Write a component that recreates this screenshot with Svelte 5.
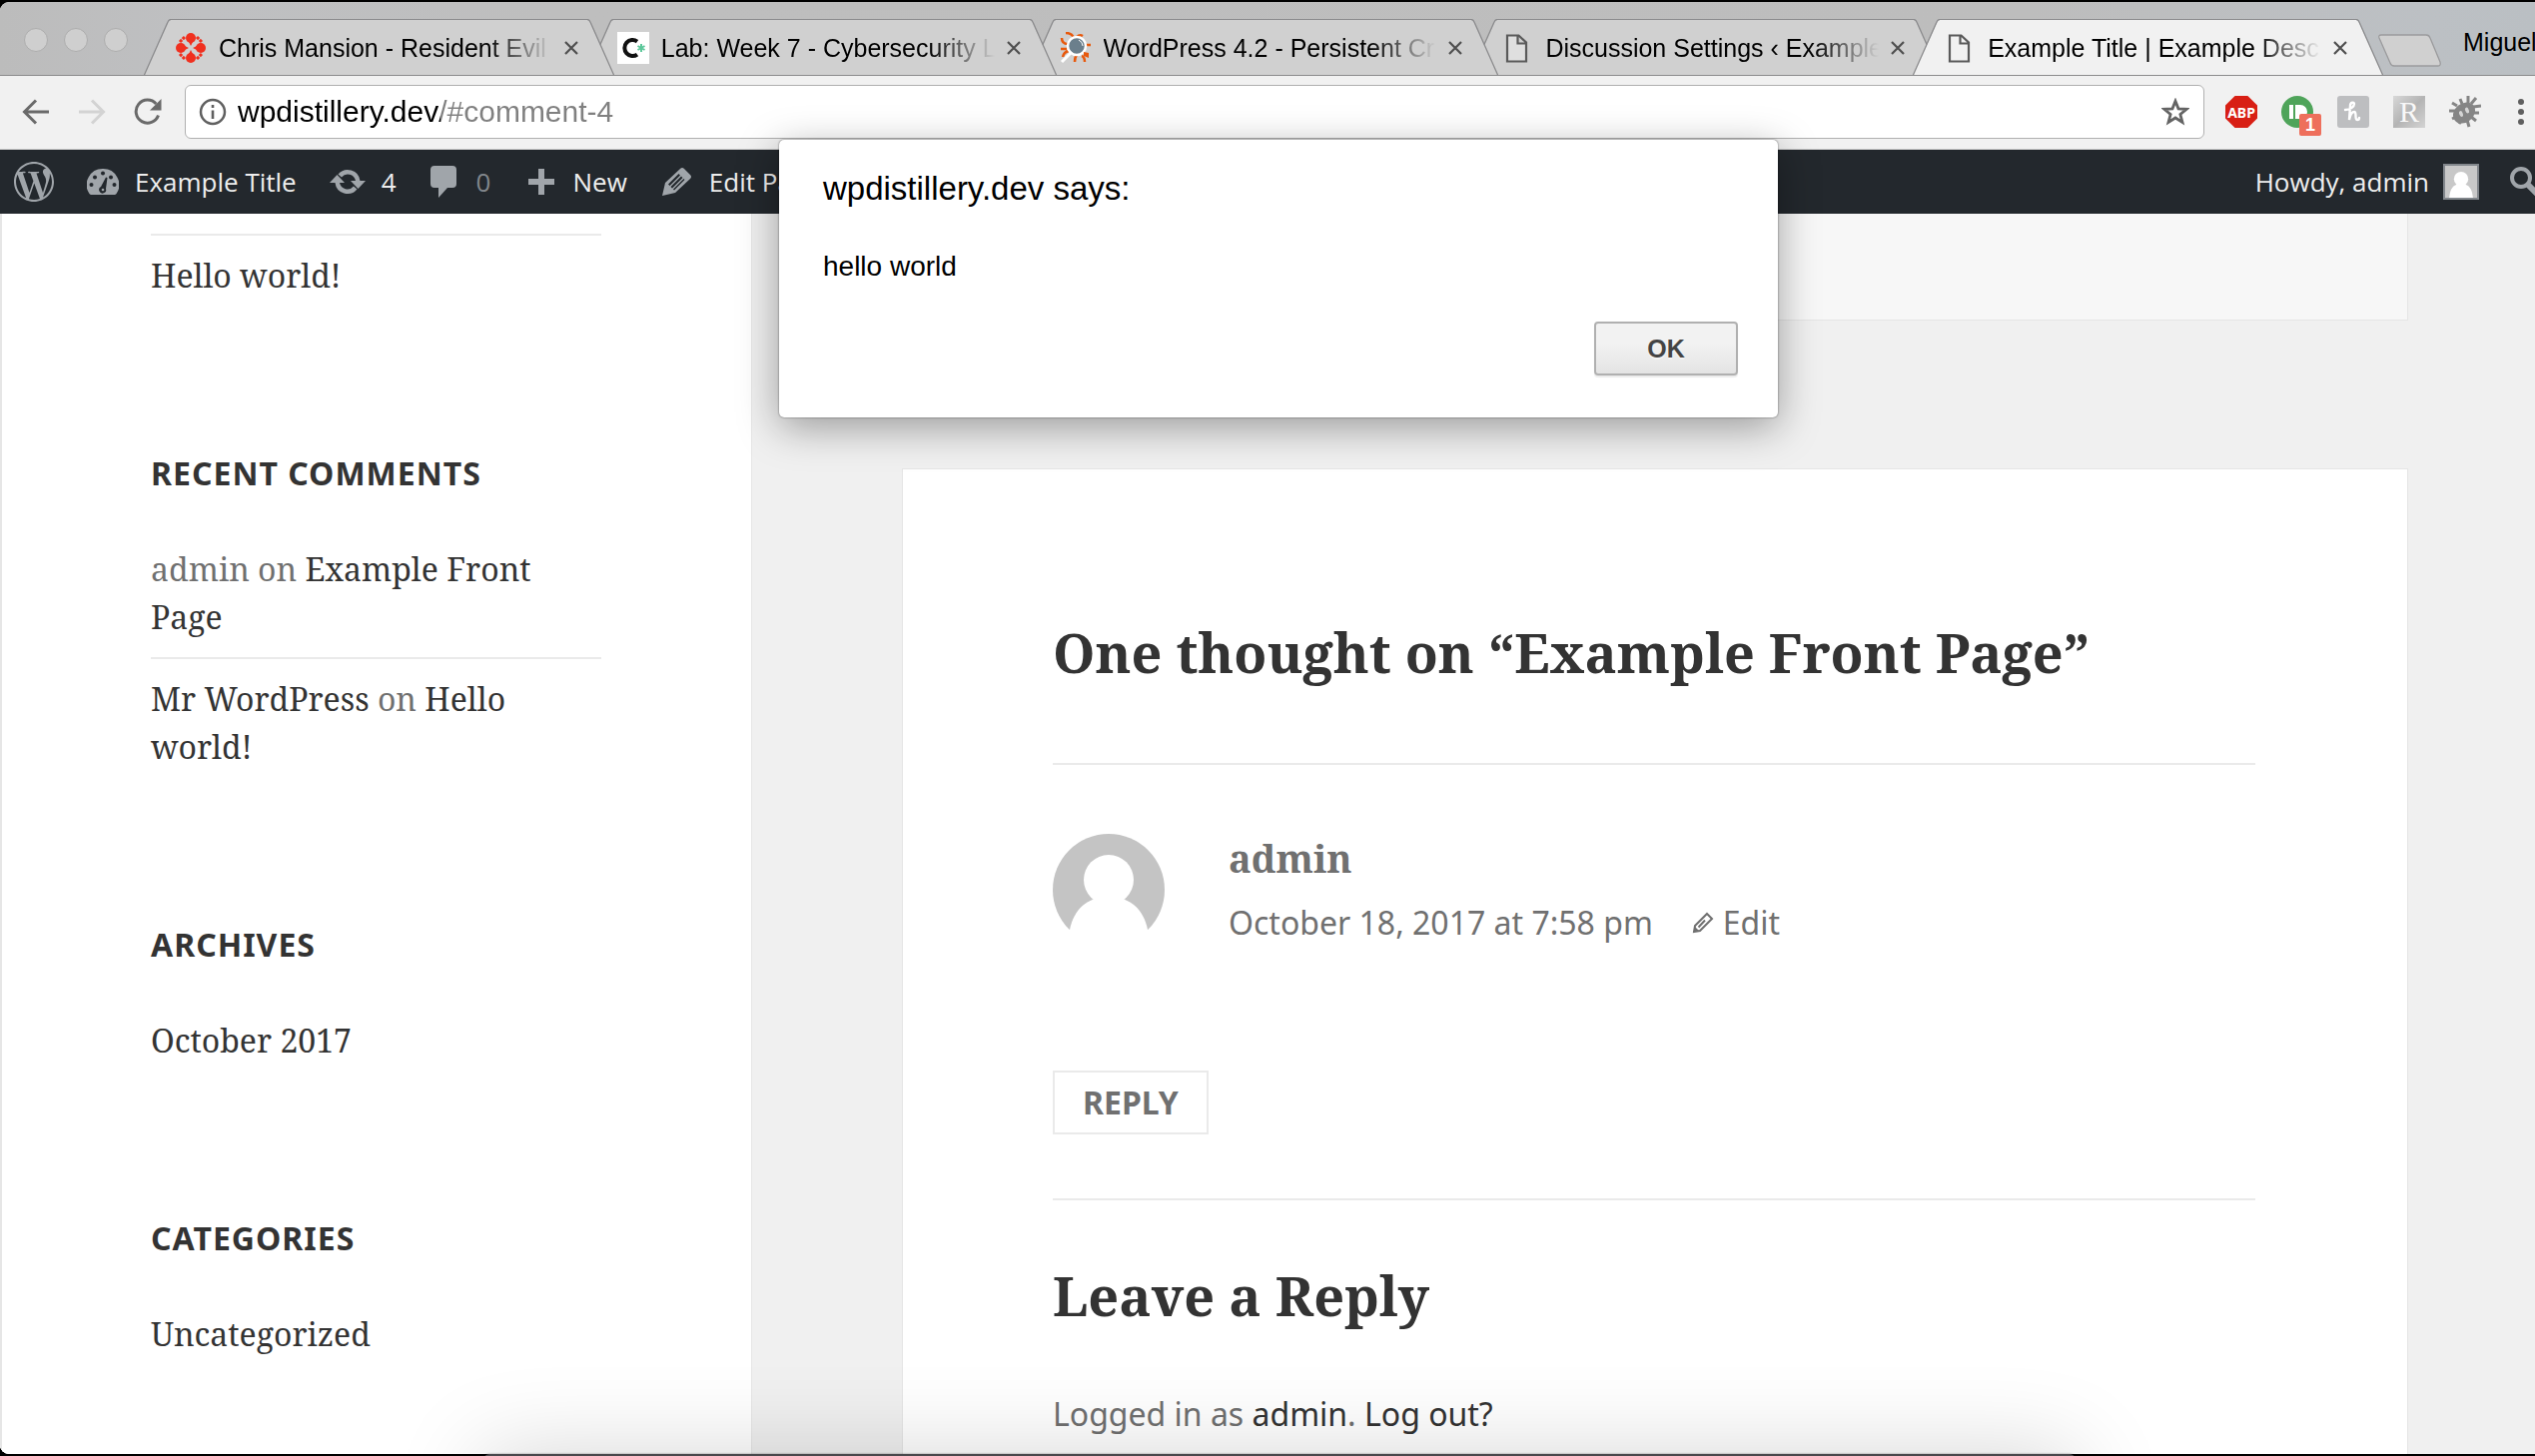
<script>
  const tabs = [
    { title: 'Chris Mansion - Resident Evil', icon: 'ign', active: false },
    { title: 'Lab: Week 7 - Cybersecurity L', icon: 'cstar', active: false },
    { title: 'WordPress 4.2 - Persistent Cr', icon: 'bug', active: false },
    { title: 'Discussion Settings ‹ Example', icon: 'doc', active: false },
    { title: 'Example Title | Example Desc', icon: 'doc', active: true }
  ];
  let url = $state('wpdistillery.dev/#comment-4');
</script>

{#snippet person()}
  <circle cx="56" cy="46" r="25" />
  <path d="M56 63c-22 0-35 13-39 33l-3 17h84l-3-17c-4-20-17-33-39-33z" />
{/snippet}

<div class="desktop">
  <div class="window">
    <header class="strip">
      <div class="lights"><i></i><i></i><i></i></div>
      <nav class="tabs" aria-label="Tabs">
        {#each tabs as tab}
          <div class="tab" class:active={tab.active}>
            <svg class="slant" viewBox="0 0 27 57" aria-hidden="true">
              <path class="fill" d="M0 57 24 4Q26 .5 27 .5V57z" />
              <path class="edge" d="M0 57 24 3Q25 .5 27 .5" />
            </svg>
            <div class="tab-body">
              <svg class="favicon" viewBox="0 0 32 32" aria-hidden="true">
                {#if tab.icon === 'ign'}
                  <g fill="#f0301f">
                    <circle cx="16" cy="6" r="5" />
                    <circle cx="16" cy="26" r="5" />
                    <circle cx="6" cy="16" r="5" />
                    <circle cx="26" cy="16" r="5" />
                    <path d="M13 8h6l-3 6zM13 24h6l-3-6zM8 13v6l6-3zM24 13v6l-6-3z" />
                  </g>
                  <path d="M5 10l5-5M22 5l5 5M5 22l5 5M22 27l5-5" stroke="#f0301f" stroke-width="3" stroke-dasharray="3 1" />
                {:else if tab.icon === 'cstar'}
                  <path d="M0 0h32v32H0z" fill="#fff" />
                  <path d="M20 9.500a8 8 0 1 0 0 13" fill="none" stroke="#111" stroke-width="4" />
                  <path d="M24 12v8M20.500 14l7 4M27.500 14l-7 4" stroke="#5cc79a" stroke-width="2" />
                {:else if tab.icon === 'bug'}
                  <g fill="none" stroke="#e8590c" stroke-width="2.500">
                    <path d="M6 1q6 0 8 5M2 6q0 6 6 6M1 17h6M3 25q1-5 6-6M15 30q0-5 2-7M22 24q3 1 3 6M25 13h6M17 5q3-3 6-1" />
                  </g>
                  <circle cx="17" cy="14" r="9" fill="#6b7f8c" stroke="#fff" stroke-width="2.500" />
                  <path d="M12 20 2 30" stroke="#fff" stroke-width="3" />
                  <path d="M19 8q4 2 4 6" stroke="#fff" fill="none" />
                  <path d="M24 20l5 1v5l-5-2z" fill="#e8590c" />
                {:else}
                  <path d="M6 3.500h11.500l7.500 7V29.500H6zM16.500 3.500v8H25" fill="#f4f4f4" fill-opacity=".4" stroke="#5a5a5a" stroke-width="2.200" />
                {/if}
              </svg>
              <a class="tab-title" href="#tab">{tab.title}</a>
              <button class="close" aria-label="Close tab">
                <svg viewBox="0 0 14 14"><path d="M1 1l12 12M13 1 1 13" stroke="#4f4f4f" stroke-width="2.200" /></svg>
              </button>
            </div>
            <svg class="slant" viewBox="0 0 27 57" aria-hidden="true">
              <path class="fill" d="M27 57 3 4Q1 .5 0 .5V57z" />
              <path class="edge" d="M27 57 3 3Q2 .5 0 .5" />
            </svg>
          </div>
        {/each}
      </nav>
      <div class="strip-end">
        <button class="new-tab" aria-label="New tab">
          <svg viewBox="0 0 66 34"><path d="M4 1h45q3 0 4 3l10 24q1 4-2 4H17q-3 0-4-3L2 4q-1-3 2-3z" fill="#d0d0d0" stroke="#9b9b9d" stroke-width="1.300" /></svg>
        </button>
        <span class="profile">Miguel</span>
      </div>
    </header>

    <div class="toolbar">
      <div class="nav-buttons">
        <button aria-label="Back"><svg viewBox="0 0 28 28"><path d="M27 14H3M14 2.500 2.500 14 14 25.500" fill="none" stroke="#6a6a6a" stroke-width="3" /></svg></button>
        <button aria-label="Forward" disabled><svg viewBox="0 0 28 28"><path d="M1 14h24M14 2.500 25.500 14 14 25.500" fill="none" stroke="#d3d3d3" stroke-width="3" /></svg></button>
        <button aria-label="Reload"><svg viewBox="0 0 28 28"><path d="M24.500 17.500A11.500 11.500 0 1 1 22.300 6" fill="none" stroke="#6a6a6a" stroke-width="3" /><path d="M27.500 1v11.500H16z" fill="#6a6a6a" /></svg></button>
      </div>
      <div class="omnibox">
        <svg class="i28" viewBox="0 0 28 28" aria-hidden="true"><circle cx="14" cy="14" r="12" fill="none" stroke="#606060" stroke-width="2.500" /><path d="M14 7v3M14 12.500v8.500" stroke="#606060" stroke-width="2.600" /></svg>
        <input type="text" aria-label="Address" bind:value={url} />
        <button class="star" aria-label="Bookmark"><svg class="i28" viewBox="0 0 28 28"><path d="M14 3.200l3 7.600 8.200.5-6.300 5.200 2.100 8-7-4.500-7 4.500 2.100-8-6.300-5.200 8.200-.5z" fill="none" stroke="#646464" stroke-width="2.800" /></svg></button>
      </div>
      <div class="extensions">
        <button class="abp" aria-label="Adblock Plus"><span>ABP</span></button>
        <button class="green" aria-label="Pushbullet">
          <svg viewBox="0 0 32 32"><circle cx="16" cy="16" r="16" fill="#4fa45a" /><path d="M8 9h4v14H8zM14 9h5a7 7 0 0 1 0 14h-5z" fill="#fff" /></svg>
          <span class="count">1</span>
        </button>
        <button aria-label="Honey"><svg viewBox="0 0 32 32"><rect width="32" height="32" rx="3" fill="#bdbec0" /><path d="M8 14c5 0 9-3 9-6 0-2-4-2-4 2l-1 14c1-5 3-8 5-8 3 0 0 8 3 8 1 0 2-1 2-2" fill="none" stroke="#fff" stroke-width="2.400" stroke-linecap="round" /></svg></button>
        <button class="letter" aria-label="Reader"><span>R</span></button>
        <button aria-label="Debugger"><svg viewBox="0 0 32 32"><g stroke="#858585" fill="none" stroke-width="3"><path d="M8 10 3 7M13 8 11 3M19 8V0M22 8l5-6M24 11l8-1M25 17h5M22 21l5 4M18 24l2 7M12 25l-2 3M7 21l-4 2M6 15H0" /></g><ellipse cx="15" cy="17" rx="12" ry="9.500" transform="rotate(-40 15 17)" fill="#858585" /><ellipse cx="12" cy="18" rx="1.800" ry="3" transform="rotate(-20 12 18)" fill="#d5d5d5" /><ellipse cx="18" cy="14.500" rx="1.800" ry="3" transform="rotate(-20 18 14.500)" fill="#d5d5d5" /></svg></button>
      </div>
      <button class="menu" aria-label="Menu"><svg viewBox="0 0 6 26"><g fill="#5f5f5f"><circle cx="3" cy="3" r="3" /><circle cx="3" cy="13" r="3" /><circle cx="3" cy="23" r="3" /></g></svg></button>
    </div>

    <nav class="adminbar" aria-label="Toolbar">
      <a href="#wp" aria-label="About WordPress"><svg width="40" height="40" viewBox="0 0 24 24"><path d="M21.469 6.825c.84 1.537 1.318 3.300 1.318 5.175 0 3.979-2.156 7.456-5.363 9.325l3.295-9.527c.615-1.540.820-2.771.820-3.864 0-.405-.026-.780-.070-1.110m-7.981.105c.647-.030 1.232-.105 1.232-.105.582-.075.514-.930-.067-.899 0 0-1.755.135-2.880.135-1.064 0-2.850-.150-2.850-.150-.585-.030-.661.855-.075.885 0 0 .540.061 1.125.090l1.680 4.605-2.370 7.080L5.354 6.900c.649-.030 1.234-.100 1.234-.100.585-.075.516-.930-.065-.896 0 0-1.746.138-2.874.138-.200 0-.438-.008-.690-.015C4.911 3.150 8.235 1.215 12 1.215c2.809 0 5.365 1.072 7.286 2.833-.046-.003-.091-.009-.141-.009-1.060 0-1.812.923-1.812 1.914 0 .890.513 1.643 1.060 2.531.411.720.890 1.643.890 2.977 0 .915-.354 1.994-.821 3.479l-1.075 3.585-3.900-11.610.001.014zM12 22.784c-1.059 0-2.081-.153-3.048-.437l3.237-9.406 3.315 9.087c.024.053.050.101.078.149-1.120.393-2.325.609-3.582.609M1.211 12c0-1.564.336-3.050.935-4.390L7.290 21.709C3.694 19.960 1.212 16.271 1.211 12M12 0C5.385 0 0 5.385 0 12s5.385 12 12 12 12-5.385 12-12S18.615 0 12 0" /></svg></a>
      <a href="#site">
        <svg width="32" height="28" viewBox="0 0 32 28"><path d="M16 1a16 16 0 0 1 13.500 25q-.6 1-2 1h-23q-1.400 0-2-1A16 16 0 0 1 16 1z" /><g fill="#23282d"><circle cx="16" cy="5.500" r="2" /><circle cx="8" cy="9.500" r="2" /><circle cx="24" cy="9.500" r="2" /><circle cx="4.500" cy="17" r="2" /><circle cx="27.500" cy="17" r="2" /><path d="M19 9.500l1.500.5-1.500 11a3.500 3.500 0 1 1-5-2z" /></g><circle cx="16" cy="22" r="1.300" /></svg>
        Example Title
      </a>
      <a href="#updates">
        <svg width="36" height="28" viewBox="0 0 36 28"><path d="M8.500 6.500A12.500 12.500 0 0 1 30.500 13H36l-7.500 8L21 13h5A8 8 0 0 0 12 9.500zM27.500 21.500A12.500 12.500 0 0 1 5.500 15H0l7.500-8L15 15h-5a8 8 0 0 0 14 3.500z" /></svg>
        4
      </a>
      <a href="#comments" class="muted">
        <svg width="31" height="32" viewBox="0 0 31 32"><path d="M5 0h18q4 0 4 4v14q0 4-4 4h-5l-9 10V22H5q-4 0-4-4V4q0-4 4-4z" /></svg>
        0
      </a>
      <a href="#new">
        <svg width="33" height="26" viewBox="0 0 33 26"><path d="M15 0h6v10h10v6H21v10h-6V16H5v-6h10z" /></svg>
        New
      </a>
      <a href="#edit-page">
        <svg width="33" height="28" viewBox="0 0 33 28"><path fill-rule="evenodd" d="M20 1q2-2 4 0l6 6q2 2 0 4L15 25 2 28 5 15zM18.500 6 8 16.500l1.500 1.500L20 7.500zM21 8.500 10.500 19l1.500 1.500L22.500 10zM23.500 11 13 21.500l1 1L24.500 12z" /></svg>
        Edit Page
      </a>
      <a href="#account" class="account">
        Howdy, admin
        <svg class="mini-avatar" viewBox="0 0 112 112"><path d="M0 0h112v112H0z" fill="#c8c8c8" /><g fill="#fff">{@render person()}</g></svg>
      </a>
      <button class="search" aria-label="Search"><svg width="25" height="32" viewBox="0 0 25 32"><circle cx="11" cy="12" r="9" fill="none" stroke="#a0a5aa" stroke-width="4" /><path d="M17 18l12 12" stroke="#a0a5aa" stroke-width="6" /></svg></button>
    </nav>

    <div class="page">
      <aside>
        <ul class="posts"><li><a href="#hello">Hello world!</a></li></ul>
        <section>
          <h2>Recent Comments</h2>
          <ul>
            <li>admin on <a href="#front">Example Front Page</a></li>
            <li><a href="#mr">Mr WordPress</a> on <a href="#hello">Hello world!</a></li>
          </ul>
        </section>
        <section>
          <h2>Archives</h2>
          <ul><li><a href="#october">October 2017</a></li></ul>
        </section>
        <section>
          <h2>Categories</h2>
          <ul><li><a href="#uncategorized">Uncategorized</a></li></ul>
        </section>
      </aside>

      <main>
        <div class="entry-footer"></div>
        <section class="card">
          <h1>One thought on “Example Front Page”</h1>
          <article>
            <div class="author">
              <svg class="avatar" viewBox="0 0 112 112" aria-hidden="true">
                <defs><clipPath id="round"><circle cx="56" cy="56" r="56" /></clipPath></defs>
                <g clip-path="url(#round)"><path d="M0 0h112v96H0z" fill="#c4c4c4" /><g fill="#fff">{@render person()}</g></g>
              </svg>
              <div>
                <b>admin</b>
                <p class="meta">
                  <a href="#comment-4">October 18, 2017 at 7:58 pm</a>
                  <a class="edit" href="#edit"><svg width="24" height="24" viewBox="0 0 24 24"><path d="M16 3l5 5L9 20l-6 1 1-6zM14 9.500 7.500 16.500" fill="none" stroke="#707070" stroke-width="2" /><path d="M3 21l1-5 4 4z" fill="#707070" /></svg>Edit</a>
                </p>
              </div>
            </div>
            <a class="reply" href="#reply">Reply</a>
          </article>
          <h1>Leave a Reply</h1>
          <p class="logged">Logged in as <a href="#admin">admin</a>. <a href="#logout">Log out?</a></p>
        </section>
      </main>
    </div>
  </div>

  <div class="dialog" role="alertdialog" aria-labelledby="dialog-title" aria-describedby="dialog-text">
    <h2 id="dialog-title">wpdistillery.dev says:</h2>
    <p id="dialog-text">hello world</p>
    <button>OK</button>
  </div>
  <div class="dock-shadow"></div>
</div>

<style>
  :global(body) { background: #000; }
  * { box-sizing: border-box; margin: 0; padding: 0; }
  a { color: inherit; text-decoration: none; }
  button { border: 0; background: none; color: inherit; font: inherit; display: flex; }
  ul { list-style: none; }
  svg { display: block; flex: none; }

  .desktop { position: relative; height: 100vh; padding: 2px 0; overflow: hidden; font-family: "Liberation Sans", Arial, sans-serif; }
  .window { display: flex; flex-direction: column; height: 100%; overflow: hidden; border-radius: 9px 0 0 9px; background: #f1f1f1; }

  .strip { flex: none; display: flex; align-items: flex-end; height: 74px; overflow: hidden; border-bottom: 1px solid #8b8b8d; background: linear-gradient(90deg, #bcbcbc, #bfc0c2 8%, #bebebe 22%, #bdbdbd 80%, #bcc0c4 96%, #babfc3); font-size: 25px; }
  .lights { flex: none; display: flex; gap: 16px; width: 144px; padding: 0 0 23px 24px; }
  .lights i { width: 24px; height: 24px; border: 1px solid #adadad; border-radius: 50%; background: #cfcfcf; }
  .tabs { flex: 1; min-width: 0; display: flex; align-self: flex-end; position: relative; margin-bottom: -1px; }
  .tab { flex: 1; min-width: 0; display: flex; height: 57px; margin-right: -28px; position: relative; --fill: #d0d0d0; }
  .tab:last-child { margin-right: 0; }
  .tab:nth-child(1) { z-index: 4; }
  .tab:nth-child(2) { z-index: 3; }
  .tab:nth-child(3) { z-index: 2; }
  .tab:nth-child(4) { z-index: 1; }
  .tab.active { z-index: 5; --fill: #f1f1f1; }
  .tab:not(.active) { border-bottom: 1px solid #8b8b8d; }
  .slant { width: 27px; height: 57px; }
  .slant .fill { fill: var(--fill); }
  .slant .edge { fill: none; stroke: #8b8b8d; stroke-width: 1.300; }
  .tab-body { flex: 1; min-width: 0; display: flex; align-items: center; padding: 0 9px 0 4px; border-top: 1px solid #8b8b8d; background: var(--fill); }
  .favicon { width: 32px; height: 32px; }
  .tab-title { flex: 1; min-width: 0; margin: 0 10px 0 12px; overflow: hidden; white-space: nowrap; line-height: 32px; color: #000; mask-image: linear-gradient(90deg, #000 calc(100% - 68px), transparent calc(100% - 2px)); }
  .close svg { width: 14px; height: 14px; }
  .strip-end { flex: none; display: flex; align-items: flex-end; gap: 20px; width: 158px; margin-left: -6px; }
  .new-tab { padding-bottom: 7px; }
  .new-tab svg { width: 66px; height: 34px; }
  .profile { line-height: 30px; padding-bottom: 18px; }

  .toolbar { flex: none; display: flex; align-items: center; height: 74px; padding: 0 11px 1px 22px; border-bottom: 1px solid #cbcbcb; background: #f1f1f1; }
  .nav-buttons { display: flex; gap: 28px; width: 163px; }
  .nav-buttons svg, .i28 { width: 28px; height: 28px; }
  .omnibox { flex: 1; display: flex; align-items: center; gap: 11px; height: 54px; padding: 0 14px 0 13px; border: 1px solid #b0b0b0; border-radius: 6px; background: #fff; }
  .omnibox input { flex: 1; min-width: 0; border: 0; outline: 0; font: 30px "Liberation Sans", Arial, sans-serif; background: linear-gradient(90deg, #000 203px, #808080 203px); background-clip: text; -webkit-background-clip: text; -webkit-text-fill-color: transparent; }
  .extensions { display: flex; gap: 24px; margin: 0 37px 0 21px; }
  .extensions button { position: relative; width: 32px; height: 32px; align-items: center; justify-content: center; }
  .extensions svg { width: 32px; height: 32px; }
  .extensions .abp { background: #d81f14; clip-path: polygon(30% 0, 70% 0, 100% 30%, 100% 70%, 70% 100%, 30% 100%, 0 70%, 0 30%); color: #fff; font: bold 14px "Noto Sans", sans-serif; }
  .count { position: absolute; left: 18px; top: 18px; width: 22px; height: 22px; border-radius: 2px; background: #ee6f5c; color: #fff; font: bold 18px/22px "Liberation Sans", sans-serif; text-align: center; }
  .extensions .letter { background: linear-gradient(135deg, #d8d8d8, #b4b4b4 50%, #d4d4d4); color: #f8f8f8; font: 30px/32px "Liberation Serif", serif; }
  .menu svg { width: 6px; height: 26px; }

  .adminbar { flex: none; display: flex; align-items: center; gap: 33px; height: 64px; padding-left: 14px; background: #23282d; color: #eee; font: 26px "Open Sans", sans-serif; white-space: nowrap; }
  .adminbar a { display: flex; align-items: center; gap: 16px; }
  .adminbar svg { fill: #a0a5aa; }
  .adminbar .muted { color: #82878c; }
  .adminbar .account { margin: 0 -2px 0 auto; gap: 14px; }
  .mini-avatar { width: 36px; height: 36px; border: 2px solid #82878c; }

  .page { flex: 1; min-height: 0; display: flex; align-items: stretch; overflow: hidden; background: #f0f0f0; color: #333; }
  aside { flex: none; width: 753px; padding: 20px 150px 0 149px; border: solid #e6e6e6; border-width: 0 1px 0 2px; background: #fff; font: 32px/48px "Noto Serif", serif; color: #707070; }
  aside a { color: #333; }
  aside section { margin-top: 150px; }
  h2 { font: bold 32px/48px "Noto Sans", sans-serif; }
  aside h2 { margin-bottom: 48px; color: #333; text-transform: uppercase; letter-spacing: 1px; }
  .posts li, li + li { padding-top: 16px; border-top: 2px solid #eaeaea; }
  li:not(:last-child) { padding-bottom: 16px; }

  main { flex: 1; min-width: 0; padding: 0 127px 0 150px; }
  .entry-footer { height: 107px; border: solid #e5e5e5; border-width: 0 1px 1px 0; background: #f7f7f7; }
  .card { margin-top: 148px; min-height: 1100px; padding: 151px 152px 0 150px; border: 1px solid #e5e5e5; background: #fff; font: 32px/48px "Noto Sans", sans-serif; color: #707070; }
  h1 { font: bold 54px/64px "Noto Serif", serif; color: #333; }
  article { display: flex; flex-direction: column; align-items: flex-start; margin: 79px 0 63px; padding: 69px 0 64px; border: solid #eaeaea; border-width: 2px 0; }
  .author { display: flex; gap: 64px; }
  .avatar { width: 112px; height: 112px; }
  b { display: block; font: bold 38px/48px "Noto Serif", serif; }
  .meta { display: flex; gap: 38px; margin-top: 17px; }
  .edit { display: flex; align-items: center; gap: 8px; }
  .reply { margin-top: 124px; padding: 0 28px; border: 2px solid #eaeaea; font-weight: bold; line-height: 60px; text-transform: uppercase; }
  .logged { margin-top: 63px; }
  .logged a { color: #333; }

  .dialog { position: absolute; z-index: 10; top: 140px; left: 780px; display: flex; flex-direction: column; width: 1000px; padding: 31px 40px 42px 44px; border-radius: 5px; background: #fff; color: #000; box-shadow: 0 0 2px rgba(0, 0, 0, .6), 0 10px 40px rgba(0, 0, 0, .36); }
  .dialog h2 { font: 33px/36px "Liberation Sans", Arial, sans-serif; }
  .dialog p { margin: 44px 0 39px; font-size: 28px; line-height: 32px; }
  .dialog button { align-self: flex-end; align-items: center; justify-content: center; width: 144px; height: 54px; border: 2px solid #b0b0b0; border-radius: 4px; background: linear-gradient(#f2f2f2 38%, #e4e4e4); box-shadow: 0 2px 1px rgba(0, 0, 0, .08); color: #444; font-size: 25px; font-weight: bold; text-shadow: 0 2px 0 #f4f4f4; }
  .dock-shadow { position: absolute; left: 484px; right: 460px; bottom: -198px; height: 200px; border-radius: 6px; background: #4a494d; box-shadow: 0 0 2px rgba(0, 0, 0, .5), 0 0 90px rgba(0, 0, 0, .17); }
</style>
